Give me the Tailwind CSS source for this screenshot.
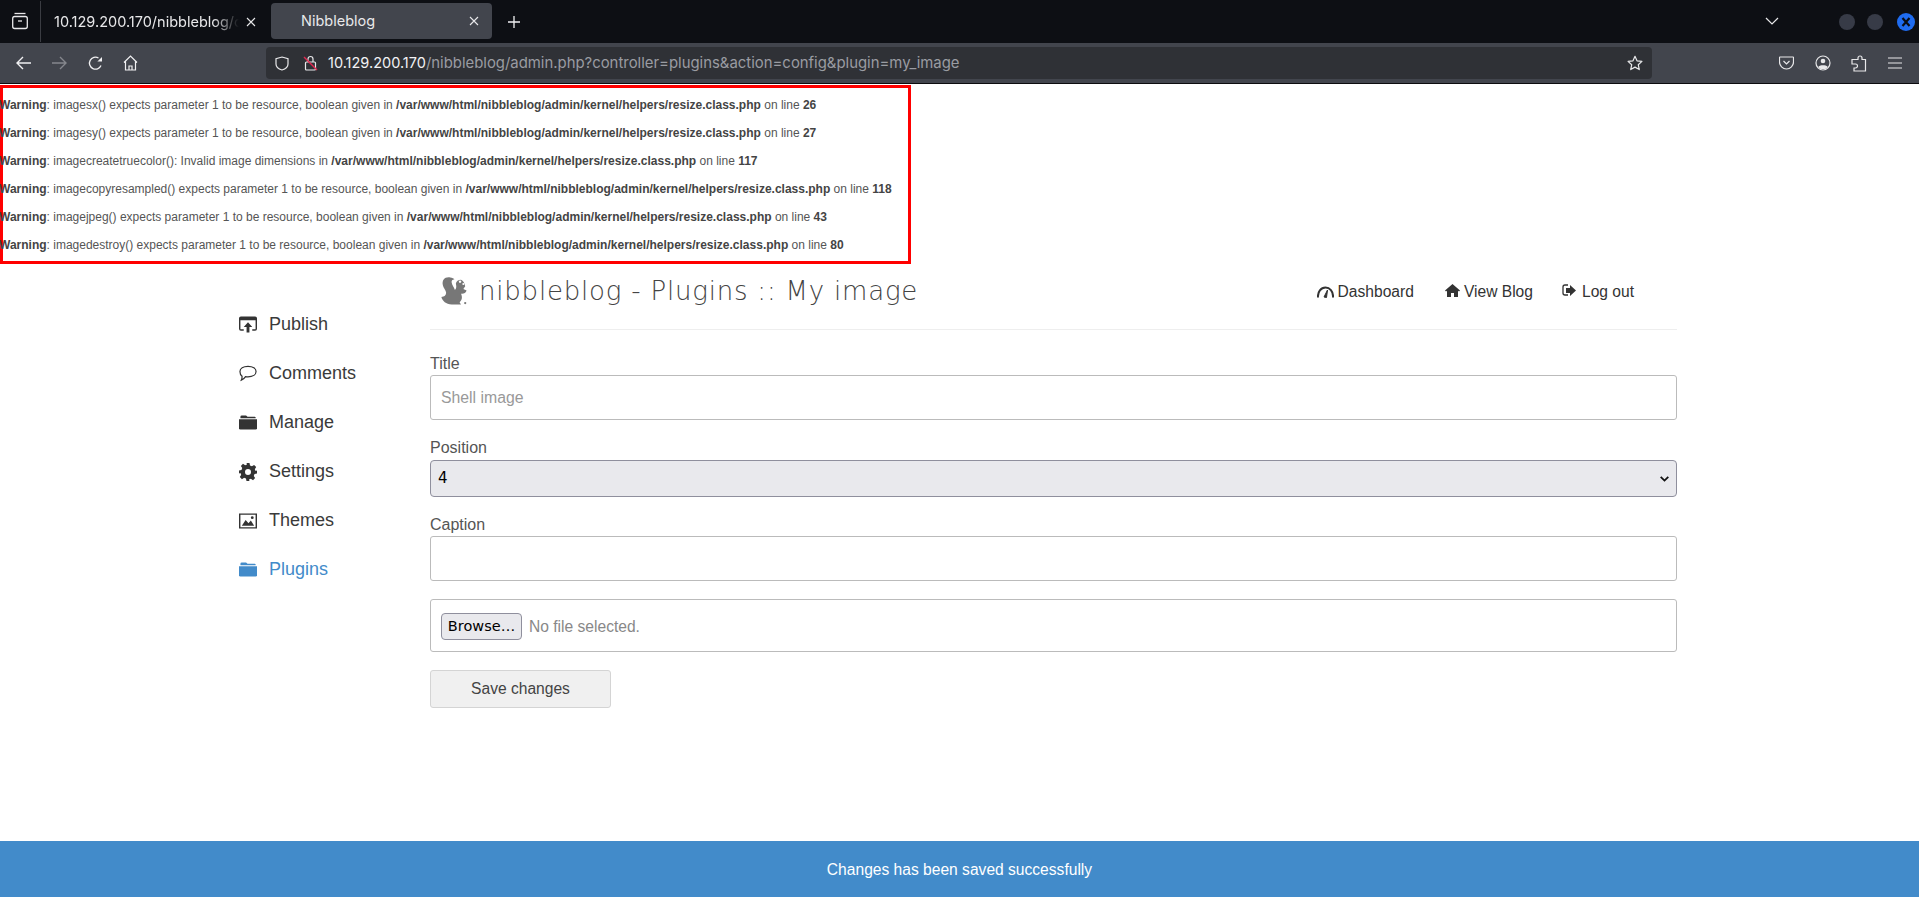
<!DOCTYPE html>
<html lang="en">
<head>
    <meta charset="UTF-8">
    <meta name="viewport" content="width=device-width, initial-scale=1.0">
    <title>Nibbleblog</title>
    <script src="https://cdn.jsdelivr.net/npm/@tailwindcss/browser@4"></script>
</head>
<body class="bg-white h-[897px] overflow-hidden flex flex-col font-['Liberation_Sans',sans-serif] text-[#333]">

    <!-- tab bar -->
    <div class="h-[43px] bg-[#0d0f14] flex items-center text-[#e8e8ea] font-['Inter',sans-serif] shrink-0">
        <div class="w-[41px] h-[41px] mb-[1px] border-r border-[#3a3c42] flex items-center justify-center shrink-0">
            <svg width="18" height="18" viewBox="0 0 18 18" fill="none" stroke="#e8e8ea" stroke-width="1.3"><path d="M3.5 1.5h11"/><rect x="1.7" y="4.5" width="14.6" height="12" rx="2"/><path d="M7 9h4"/></svg>
        </div>
        <div class="w-[230px] h-full flex items-center pl-[13px] shrink-0">
            <span class="w-[185px] overflow-hidden whitespace-nowrap text-[14.5px] [mask-image:linear-gradient(to_right,black_86%,transparent)]">10.129.200.170/nibbleblog/c</span>
            <svg class="ml-[7px]" width="10" height="10" viewBox="0 0 10 10" stroke="#e8e8ea" stroke-width="1.1"><path d="M1 1l8 8M9 1l-8 8"/></svg>
        </div>
        <div class="w-[221px] h-[36px] mb-[2px] bg-[#42454d] rounded-[4px] flex items-center pl-[30px] pr-[13px] justify-between shrink-0">
            <span class="text-[14.5px]">Nibbleblog</span>
            <svg width="10" height="10" viewBox="0 0 10 10" stroke="#e8e8ea" stroke-width="1.1"><path d="M1 1l8 8M9 1l-8 8"/></svg>
        </div>
        <svg class="ml-[16px]" width="12" height="12" viewBox="0 0 12 12" stroke="#f0f0f2" stroke-width="1.3"><path d="M6 0v12M0 6h12"/></svg>
        <svg class="ml-[1245px] mb-[2px]" width="14" height="8" viewBox="0 0 14 8" fill="none" stroke="#e8e8ea" stroke-width="1.2"><path d="M1 1l6 6 6-6"/></svg>
        <div class="ml-[60px] w-4 h-4 rounded-full bg-[#373b47]"></div>
        <div class="ml-[12px] w-4 h-4 rounded-full bg-[#373b47]"></div>
        <div class="ml-[14px] w-[18px] h-[18px] rounded-full bg-[#1f6cf0] flex items-center justify-center">
            <svg width="10" height="10" viewBox="0 0 10 10" stroke="#0a0d14" stroke-width="2.2"><path d="M1.5 1l7 8M8.5 1l-7 8"/></svg>
        </div>
    </div>

    <!-- toolbar -->
    <div class="h-[41px] bg-[#42454d] border-b border-[#0c0c0f] flex items-center shrink-0 font-['Inter',sans-serif]">
        <div class="w-[266px] flex items-center pl-[16px] gap-[21px] shrink-0">
            <svg width="15" height="14" viewBox="0 0 15 14" fill="none" stroke="#f0f0f2" stroke-width="1.4"><path d="M15 7H1.2M7 1L1 7l6 6"/></svg>
            <svg width="15" height="14" viewBox="0 0 15 14" fill="none" stroke="#85878d" stroke-width="1.4"><path d="M0 7h13.8M8 1l6 6-6 6"/></svg>
            <svg width="15" height="15" viewBox="0 0 15 15" fill="none" stroke="#f0f0f2" stroke-width="1.3"><path d="M13 9.5A6 6 0 1 1 10.5 2"/><path d="M14 1v4.6H9.4z" fill="#f0f0f2" stroke="none"/></svg>
            <svg class="-ml-[1px]" width="15" height="16" viewBox="0 0 15 16" fill="none" stroke="#f0f0f2" stroke-width="1.2"><path d="M1 7.5L7.5 1 14 7.5M2.5 6.5V15h10V6.5M6 15v-4h3v4"/></svg>
        </div>
        <div class="w-[1386px] h-[32px] bg-[#2f3136] rounded-[4px] flex items-center pl-[9px] pr-[9px] shrink-0">
            <svg width="14" height="15" viewBox="0 0 14 15" fill="none" stroke="#e8e8ea" stroke-width="1.2"><path d="M7 1l6 1.6V8c0 3-2.6 5-6 6-3.4-1-6-3-6-6V2.6z"/></svg>
            <svg class="ml-[14px]" width="15" height="16" viewBox="0 0 15 16" fill="none"><rect x="2.5" y="7" width="10" height="8" rx="1" stroke="#e8e8ea" stroke-width="1.2"/><path d="M5 7V4a2.5 2.5 0 0 1 5 0v3" stroke="#e8e8ea" stroke-width="1.2"/><path d="M1 2l13 13" stroke="#e22850" stroke-width="1.4"/></svg>
            <span class="ml-[10px] text-[14.5px] text-[#f2f2f4] whitespace-nowrap">10.129.200.170<span class="text-[14.9px] text-[#9a9ca2]">/nibbleblog/admin.php?controller=plugins&amp;action=config&amp;plugin=my_image</span></span>
            <svg class="ml-auto" width="16" height="16" viewBox="0 0 24 24" fill="none" stroke="#e8e8ea" stroke-width="1.8" stroke-linejoin="round"><path d="M12 2l3 6.8 7.4.8-5.5 5 1.5 7.3L12 18.2l-6.4 3.7 1.5-7.3-5.5-5 7.4-.8z"/></svg>
        </div>
        <div class="flex items-center pl-[127px] gap-[21px]">
            <svg width="15" height="14" viewBox="0 0 15 14" fill="none" stroke="#e8e8ea" stroke-width="1.2"><path d="M1 1h13a.5.5 0 0 1 .5.5V6a7 7 0 0 1-14 0V1.5A.5.5 0 0 1 1 1z"/><path d="M4.5 5l3 3 3-3"/></svg>
            <svg width="16" height="16" viewBox="0 0 16 16" fill="none" stroke="#e8e8ea" stroke-width="1.2"><circle cx="8" cy="8" r="7"/><circle cx="8" cy="6" r="2.3" fill="#e8e8ea" stroke="none"/><path d="M3.5 11.5c2-1.6 7-1.6 9 0v1l-2 1.5h-5l-2-1.500z" fill="#e8e8ea" stroke="none"/></svg>
            <svg class="-ml-[1px]" width="16" height="17" viewBox="0 0 16 17" fill="none" stroke="#e8e8ea" stroke-width="1.2"><path d="M7 4.5V3a2 2 0 0 1 4 0v1.5h3.5V16H3v-3h1.5a2 2 0 0 0 0-4H1V4.5z"/></svg>
            <svg width="14" height="12" viewBox="0 0 14 12" stroke="#e8e8ea" stroke-width="1.2"><path d="M0 1h14M0 6h14M0 11h14"/></svg>
        </div>
    </div>

    <!-- php warnings -->
    <div class="w-[911px] h-[179px] mt-[1px] border-[3px] border-[#f00] shrink-0 text-[12px] leading-[28px] text-[#555] whitespace-nowrap pt-[3px]">
        <div class="-ml-[4px]">
            <p class="h-7"><b class="text-[#444]">Warning</b>: imagesx() expects parameter 1 to be resource, boolean given in <b class="text-[#444]">/var/www/html/nibbleblog/admin/kernel/helpers/resize.class.php</b> on line <b class="text-[#444]">26</b></p>
            <p class="h-7"><b class="text-[#444]">Warning</b>: imagesy() expects parameter 1 to be resource, boolean given in <b class="text-[#444]">/var/www/html/nibbleblog/admin/kernel/helpers/resize.class.php</b> on line <b class="text-[#444]">27</b></p>
            <p class="h-7"><b class="text-[#444]">Warning</b>: imagecreatetruecolor(): Invalid image dimensions in <b class="text-[#444]">/var/www/html/nibbleblog/admin/kernel/helpers/resize.class.php</b> on line <b class="text-[#444]">117</b></p>
            <p class="h-7"><b class="text-[#444]">Warning</b>: imagecopyresampled() expects parameter 1 to be resource, boolean given in <b class="text-[#444]">/var/www/html/nibbleblog/admin/kernel/helpers/resize.class.php</b> on line <b class="text-[#444]">118</b></p>
            <p class="h-7"><b class="text-[#444]">Warning</b>: imagejpeg() expects parameter 1 to be resource, boolean given in <b class="text-[#444]">/var/www/html/nibbleblog/admin/kernel/helpers/resize.class.php</b> on line <b class="text-[#444]">43</b></p>
            <p class="h-7"><b class="text-[#444]">Warning</b>: imagedestroy() expects parameter 1 to be resource, boolean given in <b class="text-[#444]">/var/www/html/nibbleblog/admin/kernel/helpers/resize.class.php</b> on line <b class="text-[#444]">80</b></p>
        </div>
    </div>

    <!-- main -->
    <div class="flex-1 flex pl-[238px]">
        <!-- sidebar -->
        <nav class="w-[192px] pt-[36px] shrink-0 text-[18px] text-[#3a3a3a]">
            <a class="h-[49px] flex items-center gap-[12px]">
                <svg class="ml-[1px]" width="18" height="18" viewBox="0 0 19 18"><path d="M2 0h15a2 2 0 0 1 2 2v11a2 2 0 0 1-2 2h-3v-1.5h3.5V4H1.5v9.5H5V15H2a2 2 0 0 1-2-2V2a2 2 0 0 1 2-2z" fill="#333"/><path d="M9.5 6l4.500 5h-3v6H8v-6H5z" fill="#333"/></svg>Publish
            </a>
            <a class="h-[49px] flex items-center gap-[12px]">
                <svg class="ml-[1px]" width="18" height="17" viewBox="0 0 19 17" fill="none" stroke="#333" stroke-width="1.3"><path d="M9.5 1C14.5 1 18 3.3 18 6.5S14.5 12 9.5 12c-1 0-1.8-.1-2.6-.2C5.800 13.500 4 15 2.500 15.500c.5-1 .8-2.500.7-4.200C1.700 10.300 1 8.500 1 6.500 1 3.300 4.500 1 9.500 1z"/></svg>Comments
            </a>
            <a class="h-[49px] flex items-center gap-[12px]">
                <svg class="ml-[1px]" width="18" height="15" viewBox="0 0 19 15" fill="#333"><path d="M1.5 3V1.5A1.5 1.5 0 0 1 3 0h4.5L9 1.5h7.5A1 1 0 0 1 17.5 3z"/><path d="M0 4h19v9.5a1.5 1.5 0 0 1-1.5 1.5h-16A1.5 1.5 0 0 1 0 13.5z"/></svg>Manage
            </a>
            <a class="h-[49px] flex items-center gap-[12px]">
                <svg class="ml-[1px]" width="18" height="18" viewBox="0 0 24 24" fill="#333"><path fill-rule="evenodd" d="M10 0h4l.7 3.3 2.5 1 2.9-1.8 2.800 2.800-1.800 2.900 1 2.500L24 10v4l-3.300.7-1 2.500 1.800 2.900-2.800 2.800-2.900-1.800-2.500 1L14 24h-4l-.7-3.300-2.500-1-2.900 1.800-2.800-2.800 1.800-2.900-1-2.500L0 14v-4l3.300-.7 1-2.500-1.800-2.900 2.800-2.800 2.900 1.800 2.500-1zM12 8a4 4 0 1 0 0 8 4 4 0 0 0 0-8z"/></svg>Settings
            </a>
            <a class="h-[49px] flex items-center gap-[12px]">
                <svg class="ml-[1px]" width="18" height="16" viewBox="0 0 19 16"><path fill-rule="evenodd" d="M0 0h19v16H0zM1.5 1.5v13h16v-13z" fill="#333"/><path d="M3 13l4-6 3 3.5 2.5-3 3.5 5.5z" fill="#333"/><circle cx="14" cy="4.5" r="1.5" fill="#333"/></svg>Themes
            </a>
            <a class="h-[49px] flex items-center gap-[12px] text-[#428bca]">
                <svg class="ml-[1px]" width="18" height="15" viewBox="0 0 19 15" fill="#428bca"><path d="M1.5 3V1.5A1.5 1.5 0 0 1 3 0h4.5L9 1.5h7.5A1 1 0 0 1 17.5 3z"/><path d="M0 4h19v9.5a1.5 1.5 0 0 1-1.5 1.5h-16A1.5 1.5 0 0 1 0 13.5z"/></svg>Plugins
            </a>
        </nav>

        <!-- content -->
        <div class="w-[1247px] shrink-0">
            <div class="h-[66px] border-b border-[#eeeeee] flex items-start">
                <svg class="ml-[10px] mt-[11px]" width="28" height="31" viewBox="0 0 30 32" fill="#777"><path d="M11 2C5 1 2 5 3 10c.5 3 3 5 3.5 8 .3 3-2 5-5 5 1 4 5 8 11 8h10l-1.5-2.5c3-2.5 3-6 1.5-9 3 .5 5-1 6-3.5l-3.5-1.5 2-3c-.5-3-2-6-4.5-7-3 0-5 1.5-5.5 4 .5 3 1 5-1 7-1-3-3-5-3.5-8-.3-2 .5-3 3-3.5C15 3 13 2.3 11 2z"/><circle cx="21.5" cy="6.5" r="1.3" fill="#fff"/><circle cx="25" cy="9" r="1.1" fill="#fff"/><circle cx="27" cy="29.5" r="1.2"/></svg>
                <h1 class="ml-[11px] mt-[7px] font-['DejaVu_Sans',sans-serif] font-extralight text-[26px] leading-[40px] tracking-[0.8px] text-[#444] whitespace-nowrap">nibbleblog - Plugins :: My image</h1>
                <div class="ml-auto mr-[43px] mt-[16px] flex items-center text-[15.6px] leading-[24px] text-[#333]">
                    <a class="flex items-center gap-[4px] mr-[31px]">
                        <svg width="17" height="12" viewBox="0 0 17 12" fill="none" stroke="#333"><path d="M1 11.5C.5 6 4 1.5 8.5 1.5c4 0 8 3.5 7.500 10" stroke-width="2"/><path d="M7 11l3.5-7-1 7.5z" fill="#333" stroke-width="1"/></svg>Dashboard
                    </a>
                    <a class="flex items-center gap-[4px] mr-[29px]">
                        <svg width="15" height="13" viewBox="0 0 15 13" fill="#333" class="-mt-[3px]"><path d="M7.5 0L15 6.5l-1 1-1-.8V13H9V9H6v4H2V6.7l-1 .8-1-1z"/></svg>View Blog
                    </a>
                    <a class="flex items-center gap-[6px]">
                        <svg width="14" height="13" viewBox="0 0 14 13" class="-mt-[3px]"><path d="M6 1H3a2 2 0 0 0-2 2v6a2 2 0 0 0 2 2h3" fill="none" stroke="#333" stroke-width="1.3"/><path d="M8 1l6 5.5L8 12V9H4V4h4z" fill="#333"/></svg>Log out
                    </a>
                </div>
            </div>

            <form class="text-[16px] text-[#555]">
                <label class="block mt-[22px] h-[23px] leading-[23px]">Title</label>
                <input class="block w-full h-[45px] border border-[#bbbbbb] rounded-[3px] px-[10px] text-[15.8px] placeholder:text-[#999]" placeholder="Shell image">
                <label class="block mt-[16px] h-[24px] leading-[23px]">Position</label>
                <div class="relative">
                    <select class="block w-full h-[37px] appearance-none bg-[#e9e9ed] border border-[#8f8f9d] rounded-[4px] pl-[7px] pr-[9px] text-[15px] text-black font-['DejaVu_Sans',sans-serif]"><option>4</option></select>
                    <svg class="absolute right-[8px] top-[16px]" width="9" height="6" viewBox="0 0 9 6" fill="none" stroke="#111" stroke-width="1.8"><path d="M.7.8L4.5 4.6 8.3.8"/></svg>
                </div>
                <label class="block mt-[16px] h-[23px] leading-[23px]">Caption</label>
                <input class="block w-full h-[45px] border border-[#bbbbbb] rounded-[3px] px-[10px]">
                <div class="mt-[18px] h-[53px] pt-[2px] border border-[#bbbbbb] rounded-[3px] flex items-center pl-[10px]">
                    <button type="button" class="w-[81px] h-[27px] bg-[#e9e9ed] border border-[#8f8f9d] rounded-[4px] text-[14.5px] text-black font-['DejaVu_Sans',sans-serif]">Browse…</button>
                    <span class="ml-[7px] text-[15.6px] text-[#888]">No file selected.</span>
                </div>
                <button type="button" class="block mt-[18px] w-[181px] h-[38px] bg-[#f0f0f0] border border-[#d4d4d4] rounded-[3px] text-[15.6px] text-[#444]">Save changes</button>
            </form>
        </div>
    </div>

    <!-- footer notice -->
    <div class="h-[56px] pt-[1px] bg-[#428bca] text-white text-[15.6px] flex items-center justify-center shrink-0">Changes has been saved successfully</div>

</body>
</html>
